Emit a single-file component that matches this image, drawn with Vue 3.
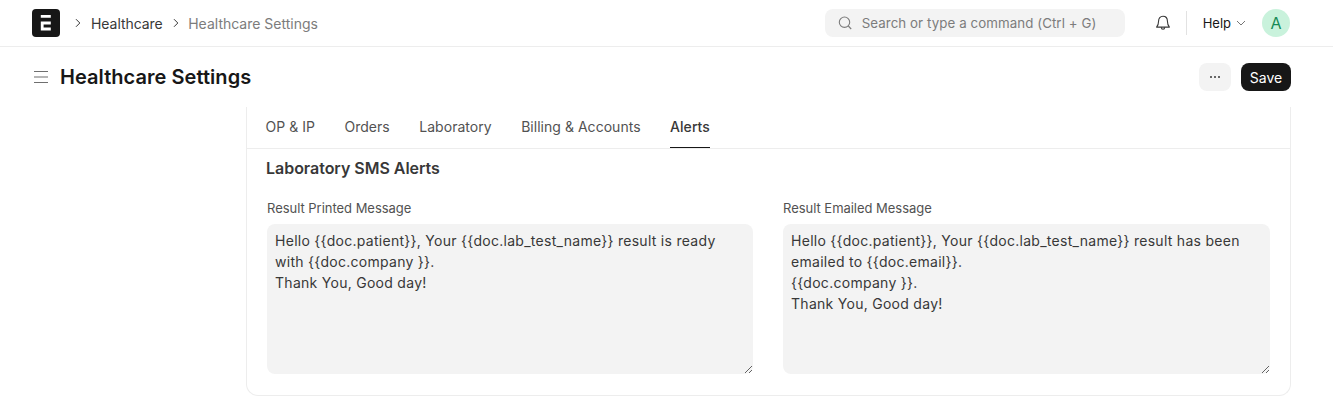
<script setup>
const tabs = ['OP & IP', 'Orders', 'Laboratory', 'Billing & Accounts', 'Alerts']
const printed = 'Hello {{doc.patient}}, Your {{doc.lab_test_name}} result is ready with {{doc.company }}.\nThank You, Good day!'
const emailed = 'Hello {{doc.patient}}, Your {{doc.lab_test_name}} result has been emailed to {{doc.email}}.\n{{doc.company }}.\nThank You, Good day!'
</script>

<template>
  <div class="page">
    <header class="nav">
      <div class="logo">
        <svg width="28" height="28" viewBox="0 0 28 28">
          <path d="M8.800 6h10v2.800h-10zM8.800 12.600h10v2.900h-7.200v3h7.200v3h-10z" fill="#fff" />
        </svg>
      </div>
      <svg class="chev first" width="8" height="10" viewBox="0 0 8 10"><path d="M2 1.200 5.800 5 2 8.800" /></svg>
      <span class="crumb">Healthcare</span>
      <svg class="chev second" width="8" height="10" viewBox="0 0 8 10"><path d="M2 1.200 5.800 5 2 8.800" /></svg>
      <span class="crumb muted">Healthcare Settings</span>
      <div class="spacer"></div>
      <div class="search">
        <svg width="16" height="16" viewBox="0 0 16 16" fill="none" stroke="#7c7c7c" stroke-width="1.100">
          <circle cx="7.500" cy="7.200" r="5.200" />
          <path d="m11.300 11 2.900 3" />
        </svg>
        <span>Search or type a command (Ctrl + G)</span>
      </div>
      <svg class="bell" width="18" height="18" viewBox="0 0 18 18" fill="none" stroke="#383838" stroke-width="1.100">
        <path d="M9 2.200c-2.800 0-4.400 2.100-4.400 4.800 0 3.300-1 4.900-2 6.100h12.800c-1-1.200-2-2.800-2-6.100 0-2.700-1.600-4.800-4.400-4.800Z" stroke-linejoin="round" />
        <path d="M7.300 13.300c0 2.600 3.400 2.600 3.400 0" />
      </svg>
      <div class="divider"></div>
      <span class="help">Help</span>
      <svg class="help-chev" width="10" height="8" viewBox="0 0 10 8" fill="none" stroke="#666" stroke-width="0.900"><path d="M1 2l4 4 4-4" /></svg>
      <div class="avatar">A</div>
    </header>

    <div class="head">
      <svg class="menu" width="16" height="14" viewBox="0 0 16 14" stroke="#6f6f6f" stroke-width="1.200">
        <path d="M1 1.500h14M1 7h14M1 12.500h14" />
      </svg>
      <h1>Healthcare Settings</h1>
      <div class="spacer"></div>
      <button class="more" type="button">
        <svg width="12" height="4" viewBox="0 0 12 4" fill="#383838"><circle cx="2" cy="2" r="1" /><circle cx="6" cy="2" r="1" /><circle cx="10" cy="2" r="1" /></svg>
      </button>
      <button class="save" type="button">Save</button>
    </div>

    <main class="card">
      <nav class="tabs">
        <a v-for="t in tabs" :key="t" class="tab" :class="{ active: t === 'Alerts' }">{{ t }}</a>
      </nav>
      <section class="body">
        <h2>Laboratory SMS Alerts</h2>
        <div class="cols">
          <label class="field">
            <span>Result Printed Message</span>
            <textarea :value="printed" spellcheck="false"></textarea>
          </label>
          <label class="field">
            <span>Result Emailed Message</span>
            <textarea :value="emailed" spellcheck="false"></textarea>
          </label>
        </div>
      </section>
    </main>
  </div>
</template>

<style>
html, body { margin: 0; background: #fff; }
</style>

<style scoped>
.page { font-family: Inter, "Noto Sans", sans-serif; color: #383838; height: 414px; overflow: hidden; }
.spacer { flex: 1; }
.nav { height: 46px; border-bottom: 1px solid #ededed; display: flex; align-items: center; padding: 0 43px 0 32px; }
.logo { width: 28px; height: 28px; background: #171717; border-radius: 4px; }
.logo svg { display: block; }
.chev { fill: none; stroke: #383838; stroke-width: 1; }
.chev.first { margin-left: 14px; margin-right: 9px; }
.chev.second { margin-left: 9px; margin-right: 8.500px; }
.crumb { font-size: 14px; color: #383838; letter-spacing: -0.05px; }
.crumb.muted { color: #7c7c7c; letter-spacing: 0; }
.search { width: 300px; height: 28px; box-sizing: border-box; background: #f3f3f3; border-radius: 8px; display: flex; align-items: center; padding-left: 12px; gap: 9px; font-size: 13.300px; color: #7c7c7c; letter-spacing: 0.08px; }
.bell { margin-left: 29px; }
.divider { width: 1px; height: 24px; background: #e2e2e2; margin: 0 16px 0 14px; }
.help { font-size: 13px; color: #171717; }
.help-chev { margin-left: 5px; }
.avatar { width: 28px; height: 28px; margin-left: 16px; border-radius: 50%; background: #c9f2dc; color: #178a55; font-size: 16px; display: flex; align-items: center; justify-content: center; }
.head { height: 60px; display: flex; align-items: center; padding: 0 42px 0 33px; }
.menu { margin-right: 11px; }
h1 { margin: 0; font-size: 20px; line-height: 28px; font-weight: 600; color: #171717; letter-spacing: 0.05px; }
.more { width: 32px; height: 28px; border: 0; border-radius: 8px; background: #f3f3f3; padding: 0; display: flex; align-items: center; justify-content: center; }
.save { width: 50px; height: 28px; margin-left: 10px; border: 0; border-radius: 8px; background: #171717; color: #fff; font: 14px Inter, sans-serif; padding: 0; }
.card { margin: 0 42px 0 246px; height: 289px; box-sizing: border-box; border: 1px solid #ededed; border-top: 0; border-radius: 0 0 12px 12px; }
.tabs { height: 42px; box-sizing: border-box; border-bottom: 1px solid #ededed; display: flex; gap: 29.500px; padding-left: 18.500px; letter-spacing: 0.03px; }
.tab { font-size: 14px; line-height: 40px; height: 41px; box-sizing: border-box; color: #525252; }
.tab.active { color: #383838; font-weight: 500; border-bottom: 1px solid #171717; }
.body { padding: 0 20px 0 20px; }
h2 { margin: 0; padding-top: 9px; margin-left: -1px; font-size: 16px; line-height: 20px; font-weight: 600; color: #383838; letter-spacing: -0.03px; }
.cols { margin-top: 22px; display: grid; grid-template-columns: 486px 487px; column-gap: 30px; }
.field { display: block; }
.field span { display: block; font-size: 13px; line-height: 16px; color: #525252; margin-bottom: 8px; letter-spacing: -0.03px; }
textarea { display: block; box-sizing: border-box; width: 100%; height: 150px; border: 0; outline: 0; border-radius: 8px; background: #f3f3f3; padding: 6px 8px; margin: 0; font: 14px/21px Inter, sans-serif; color: #383838; letter-spacing: 0.28px; overflow: hidden; }
</style>
